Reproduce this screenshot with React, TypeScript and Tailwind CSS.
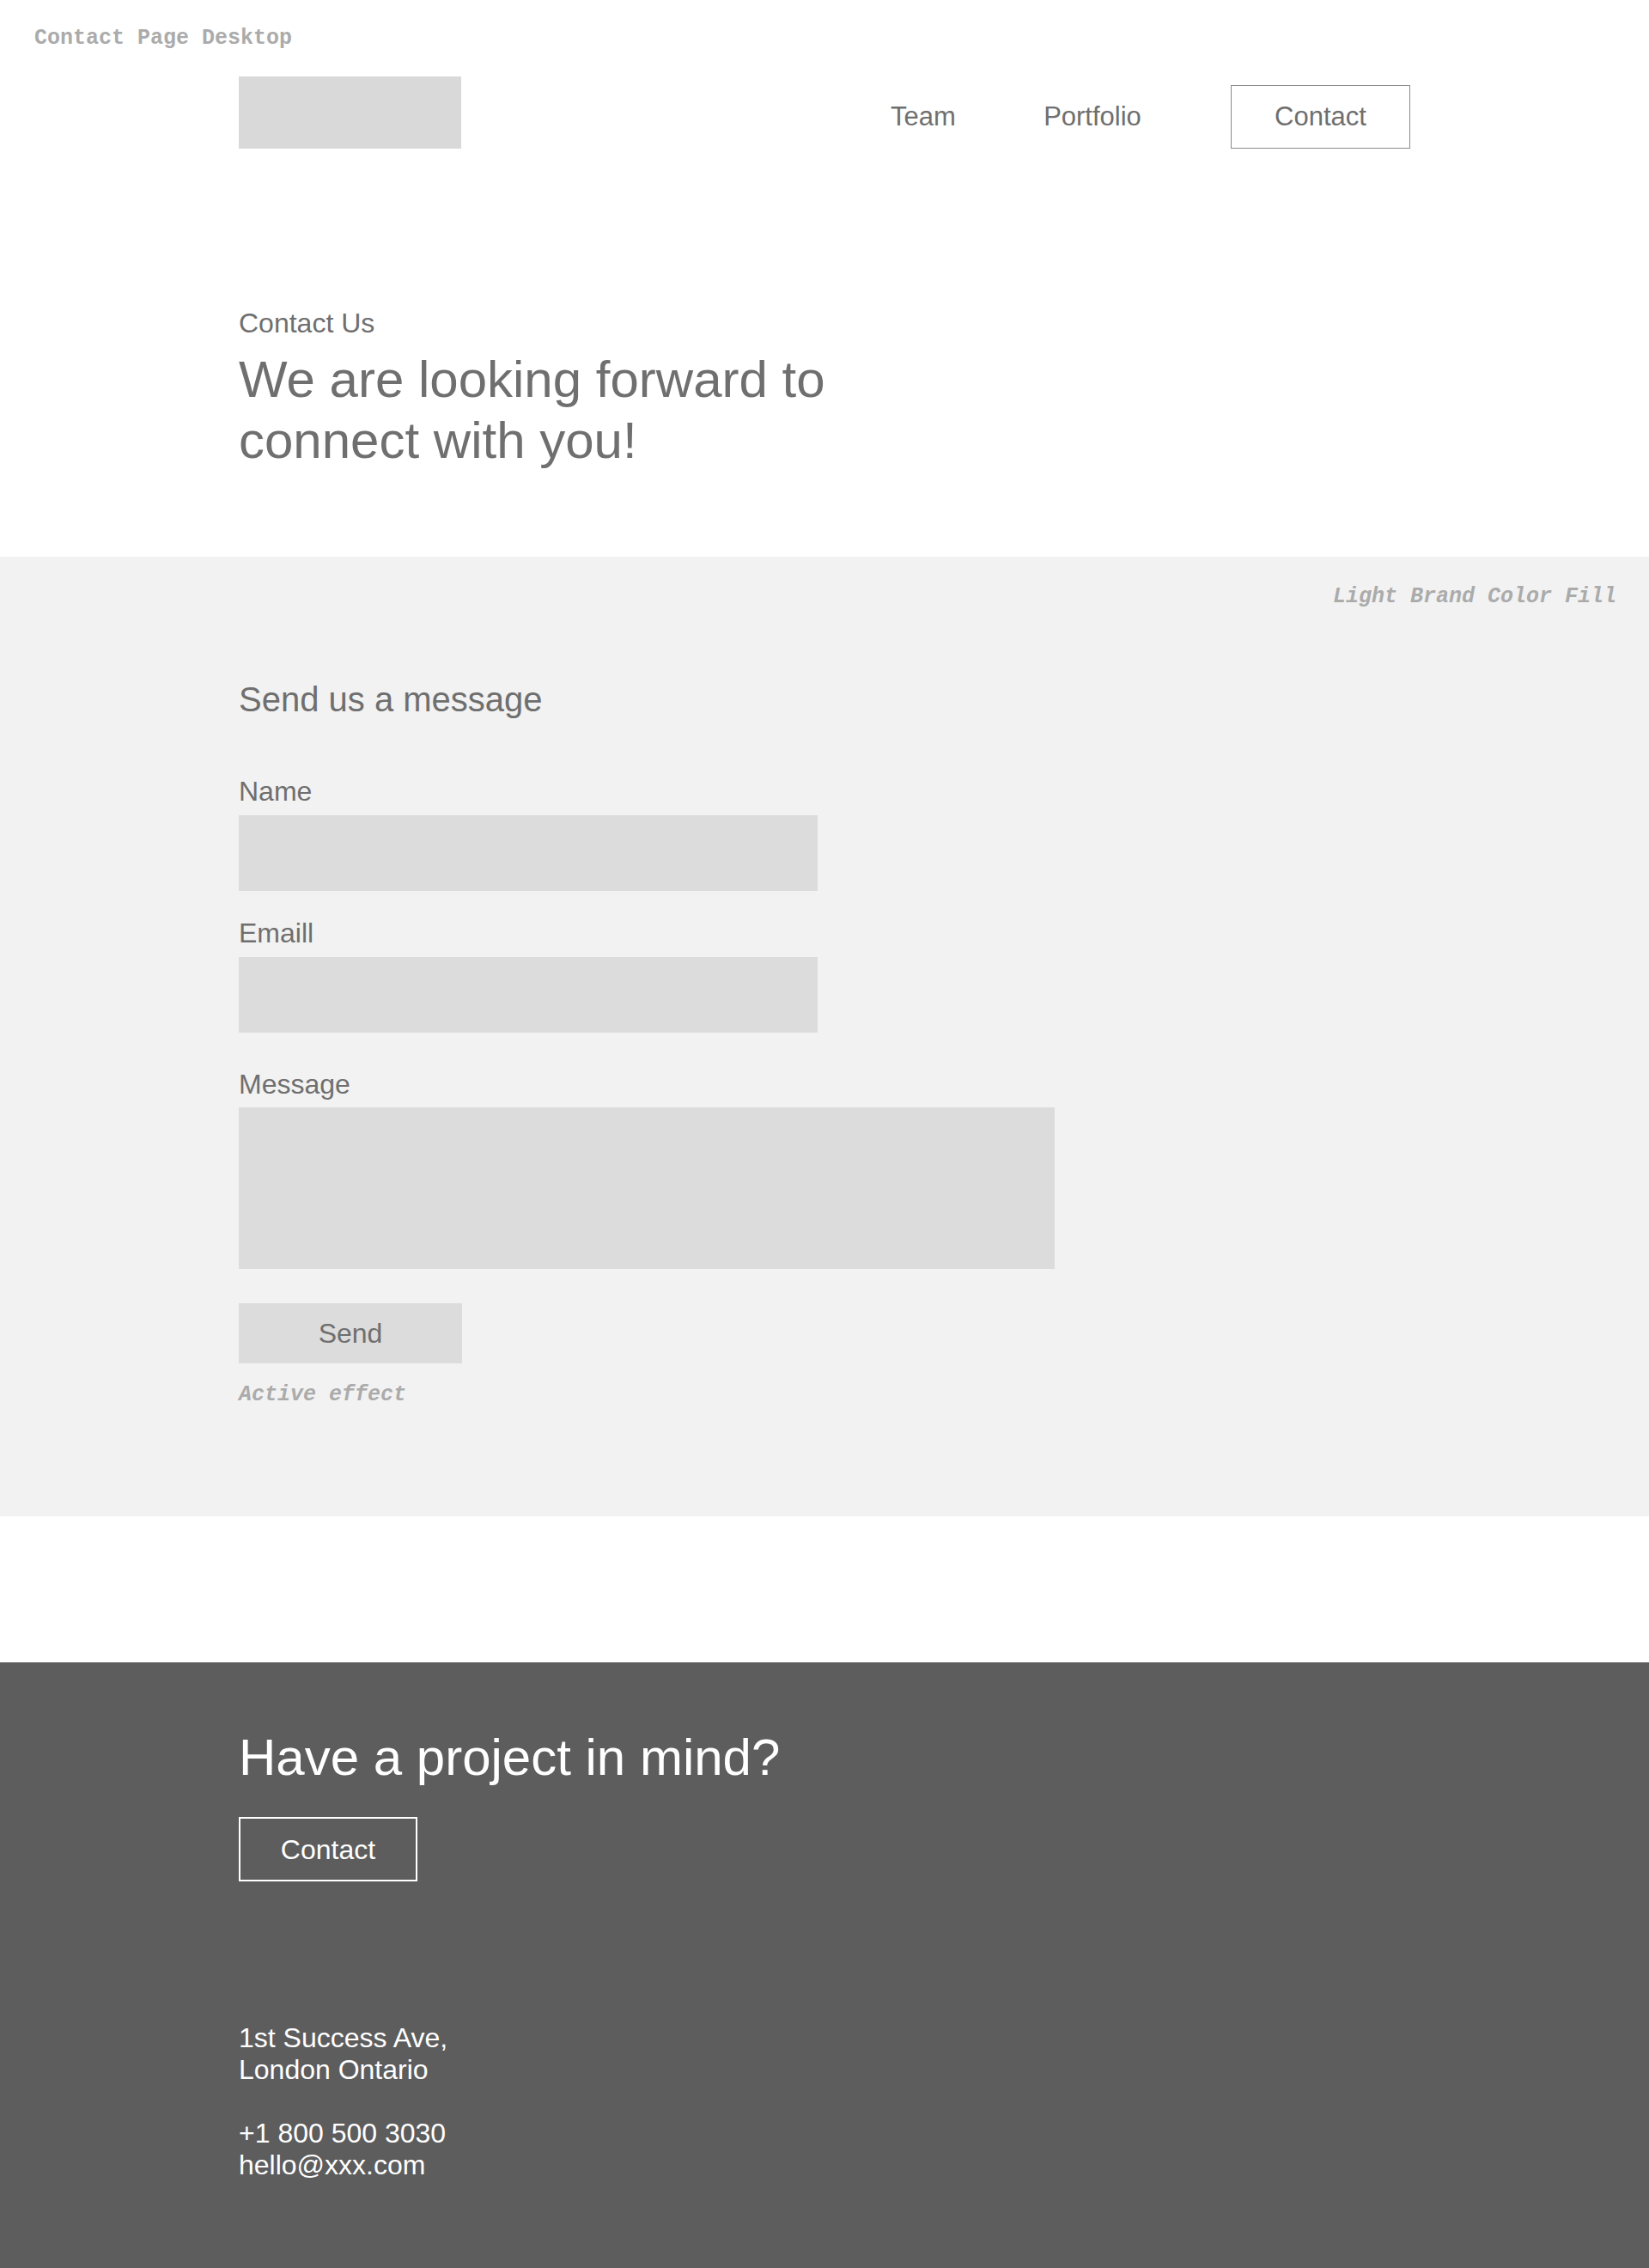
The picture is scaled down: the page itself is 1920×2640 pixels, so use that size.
const sans = "font-['Liberation_Sans',Arial,sans-serif]";
const mono = "font-['Liberation_Mono','Courier_New',monospace]";

function Header() {
  return (
    <header className="mx-auto flex w-[1364px] items-end justify-between pt-[29px]">
      <div className="h-[84px] w-[259px] bg-[#d9d9d9]" />
      <nav className="flex items-center text-[31px] text-[#6f6f6f]">
        <a className="w-[120px] text-center leading-[36px]">Team</a>
        <a className="ml-[57px] w-[160px] text-center leading-[36px]">Portfolio</a>
        <a className="ml-[81px] flex h-[74px] w-[209px] items-center justify-center border border-[#8a8a8a] leading-[36px]">
          Contact
        </a>
      </nav>
    </header>
  );
}

function Field({ label, tall, wide }: { label: string; tall?: boolean; wide?: boolean }) {
  return (
    <div>
      <label className="block text-[32px] leading-[36px] text-[#6f6f6f]">{label}</label>
      <div
        className={`${wide ? 'w-[950px]' : 'w-[674px]'} ${tall ? 'mt-[9px] h-[188px]' : 'mt-[10px] h-[88px]'} bg-[#dcdcdc]`}
      />
    </div>
  );
}

export default function App() {
  return (
    <div className={`${sans} min-h-[2640px] bg-white`}>
      <p className={`${mono} px-[40px] pt-[30px] text-[25px] font-bold leading-[30px] text-[#ababab]`}>
        Contact Page Desktop
      </p>

      <Header />

      <section className="mx-auto w-[1364px] pt-[184px] pb-[100px] text-[#6f6f6f]">
        <p className="text-[32px] leading-[38px]">Contact Us</p>
        <h1 className="mt-[11px] text-[60px] leading-[71px]">
          We are looking forward to
          <br />
          connect with you!
        </h1>
      </section>

      <section className="relative h-[1117px] bg-[#f2f2f2]">
        <p className={`${mono} absolute right-[38px] top-[32px] text-[25px] font-bold italic leading-[30px] text-[#ababab]`}>
          Light Brand Color Fill
        </p>
        <div className="mx-auto w-[1364px] pt-[142px] text-[#6f6f6f]">
          <h2 className="text-[40px] leading-[48px]">Send us a message</h2>
          <div className="mt-[65px] flex flex-col">
            <Field label="Name" />
            <div className="mt-[31px]">
              <Field label="Emaill" />
            </div>
            <div className="mt-[42px]">
              <Field label="Message" tall wide />
            </div>
          </div>
          <button className="mt-[40px] flex h-[70px] w-[260px] items-center justify-center bg-[#dcdcdc] text-[32px] text-[#6f6f6f]">
            Send
          </button>
          <p className={`${mono} mt-[22px] text-[25px] font-bold italic leading-[30px] text-[#ababab]`}>Active effect</p>
        </div>
      </section>

      <div className="h-[170px]" />

      <footer className="h-[705px] bg-[#5d5d5d] text-white">
        <div className="mx-auto w-[1364px] pt-[75px]">
          <h2 className="text-[60px] leading-[72px]">Have a project in mind?</h2>
          <button className="mt-[33px] flex h-[75px] w-[208px] items-center justify-center border-2 border-white text-[32px] text-white">
            Contact
          </button>
          <div className="mt-[164px] text-[32px] leading-[37px]">
            <p>1st Success Ave,</p>
            <p>London Ontario</p>
            <p className="mt-[37px]">+1 800 500 3030</p>
            <p>hello@xxx.com</p>
          </div>
        </div>
      </footer>
    </div>
  );
}
